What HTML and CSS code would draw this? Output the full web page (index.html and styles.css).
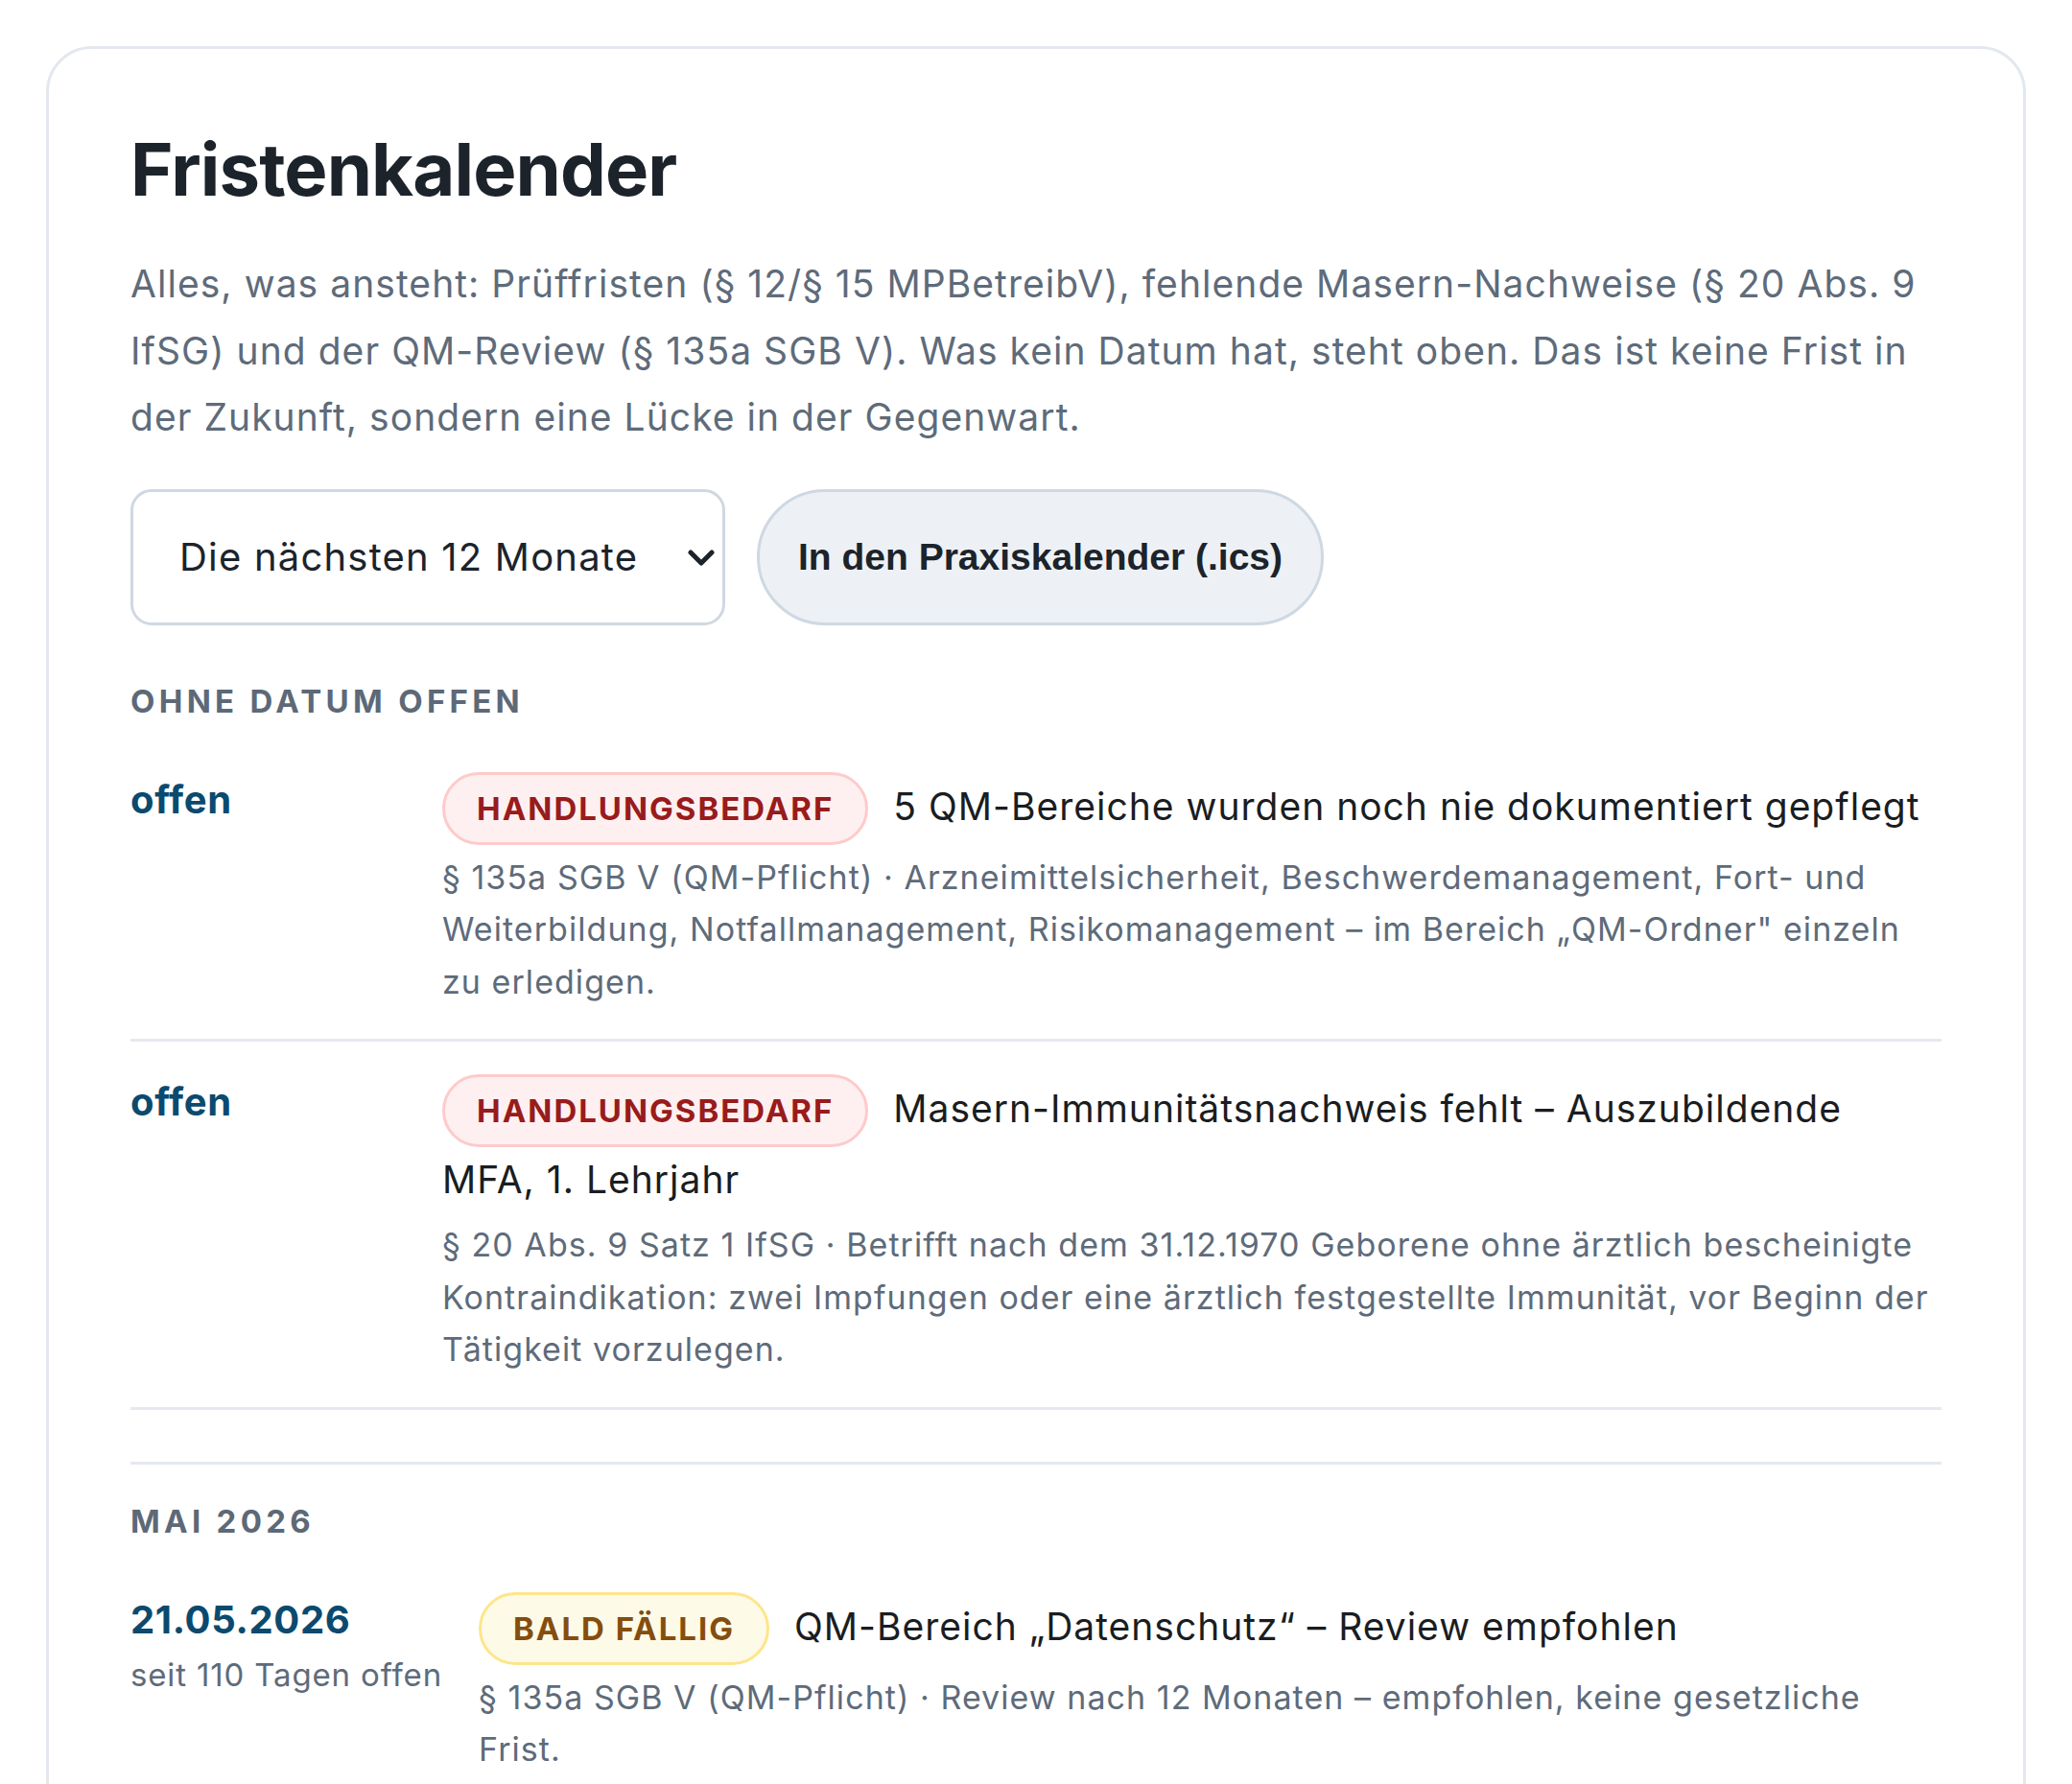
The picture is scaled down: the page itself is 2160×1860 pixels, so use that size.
FILE: index.html
```html
<!DOCTYPE html>
<html lang="de">
<head>
<meta charset="utf-8">
<title>Fristenkalender</title>
<link rel="stylesheet" href="styles.css">
</head>
<body>
<main class="card">
  <h1 class="title">Fristenkalender</h1>
  <p class="lead">Alles, was ansteht: Prüffristen (§ 12/§ 15 MPBetreibV), fehlende Masern-Nachweise (§ 20 Abs. 9 IfSG) und der QM-Review (§ 135a SGB V). Was kein Datum hat, steht oben. Das ist keine Frist in der Zukunft, sondern eine Lücke in der Gegenwart.</p>

  <div class="controls">
    <div class="select-wrap">
      <select class="select">
        <option>Die nächsten 12 Monate</option>
      </select>
      <svg class="chev" viewBox="0 0 28 18" aria-hidden="true"><path d="M3 3 L14 14 L25 3" fill="none" stroke="#1c232b" stroke-width="5" stroke-linecap="round" stroke-linejoin="round"/></svg>
    </div>
    <button class="btn" type="button">In den Praxiskalender (.ics)</button>
  </div>

  <section class="group">
    <h2 class="group-label">Ohne Datum offen</h2>

    <div class="item">
      <div class="when"><div class="date">offen</div></div>
      <div class="body">
        <div class="head"><span class="badge badge-red">Handlungsbedarf</span>5 QM-Bereiche wurden noch nie dokumentiert gepflegt</div>
        <div class="meta">§ 135a SGB V (QM-Pflicht) · Arzneimittelsicherheit, Beschwerdemanagement, Fort- und Weiterbildung, Notfallmanagement, Risikomanagement – im Bereich „QM-Ordner" einzeln zu erledigen.</div>
      </div>
    </div>

    <div class="item">
      <div class="when"><div class="date">offen</div></div>
      <div class="body">
        <div class="head"><span class="badge badge-red">Handlungsbedarf</span>Masern-Immunitätsnachweis fehlt – Auszubildende MFA, 1. Lehrjahr</div>
        <div class="meta">§ 20 Abs. 9 Satz 1 IfSG · Betrifft nach dem 31.12.1970 Geborene ohne ärztlich bescheinigte Kontraindikation: zwei Impfungen oder eine ärztlich festgestellte Immunität, vor Beginn der Tätigkeit vorzulegen.</div>
      </div>
    </div>
  </section>

  <section class="group">
    <h2 class="group-label">Mai 2026</h2>

    <div class="item">
      <div class="when">
        <div class="date">21.05.2026</div>
        <div class="since">seit 110 Tagen offen</div>
      </div>
      <div class="body">
        <div class="head"><span class="badge badge-amber">Bald fällig</span>QM-Bereich „Datenschutz“ – Review empfohlen</div>
        <div class="meta">§ 135a SGB V (QM-Pflicht) · Review nach 12 Monaten – empfohlen, keine gesetzliche Frist.</div>
      </div>
    </div>
  </section>
</main>
</body>
</html>
```

FILE: styles.css
```css
* { box-sizing: border-box; }

html, body {
  margin: 0;
  padding: 0;
  background: #ffffff;
}

body {
  font-family: Inter, "Noto Sans", "DejaVu Sans", sans-serif;
  color: #1c232b;
}

.card {
  margin: 48px 48px 0 48px;
  border: 3px solid #e3e8ee;
  border-radius: 48px;
  padding: 80px 85px 85px 85px;
  background: #ffffff;
}

.title {
  margin: 0;
  font-size: 76px;
  line-height: 1.2;
  font-weight: 700;
  letter-spacing: -0.012em;
  color: #1c232b;
}

.lead {
  margin: 39px 0 0 0;
  font-size: 39px;
  line-height: 69.5px;
  letter-spacing: 1.05px;
  color: #5e6b7a;
}

.controls {
  display: flex;
  gap: 33px;
  margin-top: 40px;
}

.select-wrap {
  position: relative;
  display: inline-block;
}

.select {
  appearance: none;
  -webkit-appearance: none;
  height: 142px;
  width: 620px;
  padding: 0 80px 0 48px;
  border: 3px solid #cfd8e2;
  border-radius: 22px;
  background: #ffffff;
  font-family: Inter, "Noto Sans", sans-serif;
  font-size: 40px;
  letter-spacing: 1.2px;
  color: #1c232b;
}

.chev {
  position: absolute;
  right: 11px;
  top: 63px;
  width: 28px;
  height: 18px;
  pointer-events: none;
}

.btn {
  height: 142px;
  padding: 0 40px;
  border: 3px solid #cfd8e2;
  border-radius: 999px;
  background: #edf1f5;
  font-family: "Liberation Sans", Arial, sans-serif;
  font-weight: 700;
  font-size: 39px;
  color: #1c232b;
}

.group {
  margin-top: 56px;
}

.group + .group {
  margin-top: 54px;
  border-top: 3px solid #e5e9ef;
  padding-top: 36px;
}

.group-label {
  margin: 0 0 17px 0;
  font-size: 33px;
  line-height: 46px;
  font-weight: 700;
  letter-spacing: 0.13em;
  text-transform: uppercase;
  color: #5d6977;
}

.item {
  display: flex;
  gap: 38px;
  padding: 34px 0 32px 0;
  border-bottom: 3px solid #e5e9ef;
}

.group + .group .item {
  border-bottom: none;
}

.when {
  min-width: 287px;
  flex: 0 0 auto;
}

.date {
  font-size: 40px;
  line-height: 57px;
  font-weight: 700;
  letter-spacing: 0.65px;
  color: #0b4a6f;
}

.since {
  margin-top: 6px;
  font-size: 33px;
  line-height: 46px;
  letter-spacing: 0.85px;
  color: #5e6b7a;
}

.body {
  flex: 1 1 auto;
  min-width: 0;
}

.head {
  font-size: 39px;
  line-height: 68px;
  letter-spacing: 1px;
  color: #1a1d21;
}

.badge {
  display: inline-block;
  margin-right: 26px;
  padding: 15px 33px;
  border: 3px solid;
  border-radius: 999px;
  font-size: 33px;
  line-height: 40px;
  font-weight: 700;
  letter-spacing: 0.06em;
  text-transform: uppercase;
}

.badge-red {
  background: #fef0f0;
  border-color: #fecaca;
  color: #991b1b;
}

.badge-amber {
  background: #fefae8;
  border-color: #fde68a;
  color: #854d0e;
}

.meta {
  margin-top: 7px;
  font-size: 34px;
  line-height: 54.5px;
  letter-spacing: 1.05px;
  color: #5e6b7a;
}
```
